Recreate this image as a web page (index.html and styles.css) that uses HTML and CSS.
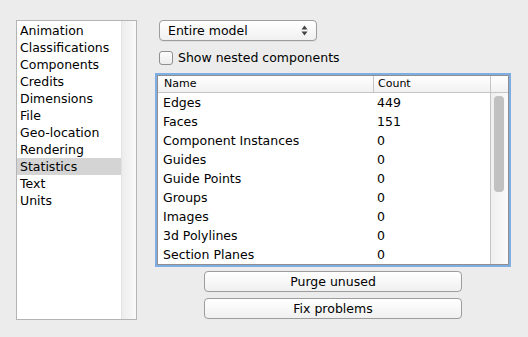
FILE: index.html
```html
<!DOCTYPE html>
<html lang="en">
<head>
  <meta charset="UTF-8">
  <title>Model Info</title>
  <link rel="stylesheet" href="styles.css">
</head>
<body>
  <div class="window">
    <div class="sidebar">
      <ul class="pages">
        <li>Animation</li>
        <li>Classifications</li>
        <li>Components</li>
        <li>Credits</li>
        <li>Dimensions</li>
        <li>File</li>
        <li>Geo-location</li>
        <li>Rendering</li>
        <li class="selected">Statistics</li>
        <li>Text</li>
        <li>Units</li>
      </ul>
      <div class="side-track"></div>
    </div>

    <div class="panel">
      <div class="popup">
        <span>Entire model</span>
        <svg class="arrows" width="7" height="11" viewBox="0 0 7 11">
          <path d="M3.5 0.5 L6.5 4.5 L0.5 4.5 Z" fill="#444"/>
          <path d="M3.5 10.5 L6.5 6.5 L0.5 6.5 Z" fill="#444"/>
        </svg>
      </div>

      <label class="check">
        <span class="box"></span>
        Show nested components
      </label>

      <div class="table">
        <div class="table-main">
          <div class="head">
            <div class="col-name">Name</div>
            <div class="col-count">Count</div>
          </div>
          <div class="rows">
            <div class="row"><div class="col-name">Edges</div><div class="col-count">449</div></div>
            <div class="row"><div class="col-name">Faces</div><div class="col-count">151</div></div>
            <div class="row"><div class="col-name">Component Instances</div><div class="col-count">0</div></div>
            <div class="row"><div class="col-name">Guides</div><div class="col-count">0</div></div>
            <div class="row"><div class="col-name">Guide Points</div><div class="col-count">0</div></div>
            <div class="row"><div class="col-name">Groups</div><div class="col-count">0</div></div>
            <div class="row"><div class="col-name">Images</div><div class="col-count">0</div></div>
            <div class="row"><div class="col-name">3d Polylines</div><div class="col-count">0</div></div>
            <div class="row"><div class="col-name">Section Planes</div><div class="col-count">0</div></div>
          </div>
        </div>
        <div class="table-scroll">
          <div class="corner"></div>
          <div class="track"><div class="thumb"></div></div>
        </div>
      </div>

      <div class="actions">
        <button type="button">Purge unused</button>
        <button type="button">Fix problems</button>
      </div>
    </div>
  </div>
</body>
</html>
```

FILE: styles.css
```css
body {
  margin: 0;
  background-color: #ececec;
  font-family: "DejaVu Sans", sans-serif;
  font-size: 12.5px;
  color: #000;
}

.window {
  display: flex;
  padding: 20px 0 0 16px;
  height: 317px;
  width: 512px;
}

.sidebar {
  display: flex;
  width: 119px;
  height: 298px;
  border: 1px solid #b4b4b4;
  background-color: white;
}

.pages {
  list-style: none;
  margin: 0;
  padding: 1px 0 0 0;
  flex: 1;
}

.pages li {
  height: 17px;
  line-height: 17px;
  padding-left: 3px;
  font-size: 12.5px;
}

.pages li.selected {
  background-color: #d4d4d4;
}

.side-track {
  width: 14px;
  border-left: 1px solid #e2e2e2;
  background: linear-gradient(to right, #ececec, #fafafa);
}

.panel {
  margin-left: 20px;
  display: flex;
  flex-direction: column;
}

.popup {
  width: 140px;
  height: 19px;
  margin-left: 2px;
  padding: 0 8px 0 8px;
  display: flex;
  align-items: center;
  justify-content: space-between;
  border: 1px solid #9d9d9d;
  border-radius: 4px;
  background: linear-gradient(#ffffff, #f0f0f0);
  box-shadow: 0 1px 0 rgba(0,0,0,0.06);
}

.check {
  display: flex;
  align-items: center;
  margin: 9px 0 0 2px;
  height: 15px;
}

.box {
  width: 12px;
  height: 12px;
  margin-right: 5px;
  border: 1px solid #8f8f8f;
  border-radius: 3px;
  background: linear-gradient(#fdfdfd, #ececec);
}

.table {
  display: flex;
  margin-top: 10px;
  width: 350px;
  height: 188px;
  border: 1px solid #8f8f8f;
  background-color: white;
  box-shadow: 0 0 0 2px #7eaee3;
}

.table-main {
  flex: 1;
  overflow: hidden;
}

.head {
  display: flex;
  height: 16px;
  line-height: 16px;
  font-size: 11px;
  border-bottom: 1px solid #c5c5c5;
  background: linear-gradient(#ffffff, #f1f1f1);
}

.head .col-name {
  width: 209px;
  padding-left: 6px;
  border-right: 1px solid #c5c5c5;
}

.head .col-count {
  padding-left: 4px;
  flex: 1;
}

.row {
  display: flex;
  height: 19px;
  line-height: 19px;
}

.row .col-name {
  width: 214px;
  padding-left: 5px;
}

.row .col-count {
  flex: 1;
}

.table-scroll {
  width: 17px;
  display: flex;
  flex-direction: column;
  border-left: 1px solid #c5c5c5;
}

.corner {
  height: 16px;
  border-bottom: 1px solid #c5c5c5;
  background: linear-gradient(#ffffff, #f1f1f1);
}

.track {
  flex: 1;
  padding: 3px 4px 0 3px;
  background: linear-gradient(to right, #efefef, #fafafa);
}

.thumb {
  height: 96px;
  border-radius: 4px;
  background-color: #c1c1c1;
}

.actions {
  display: flex;
  flex-direction: column;
  gap: 6px;
  margin: 6px 0 0 47px;
}

button {
  width: 258px;
  height: 21px;
  padding: 0;
  font-family: "DejaVu Sans", sans-serif;
  font-size: 12.5px;
  color: #000;
  border: 1px solid #9d9d9d;
  border-radius: 4px;
  background: linear-gradient(#ffffff, #f0f0f0);
}
```
